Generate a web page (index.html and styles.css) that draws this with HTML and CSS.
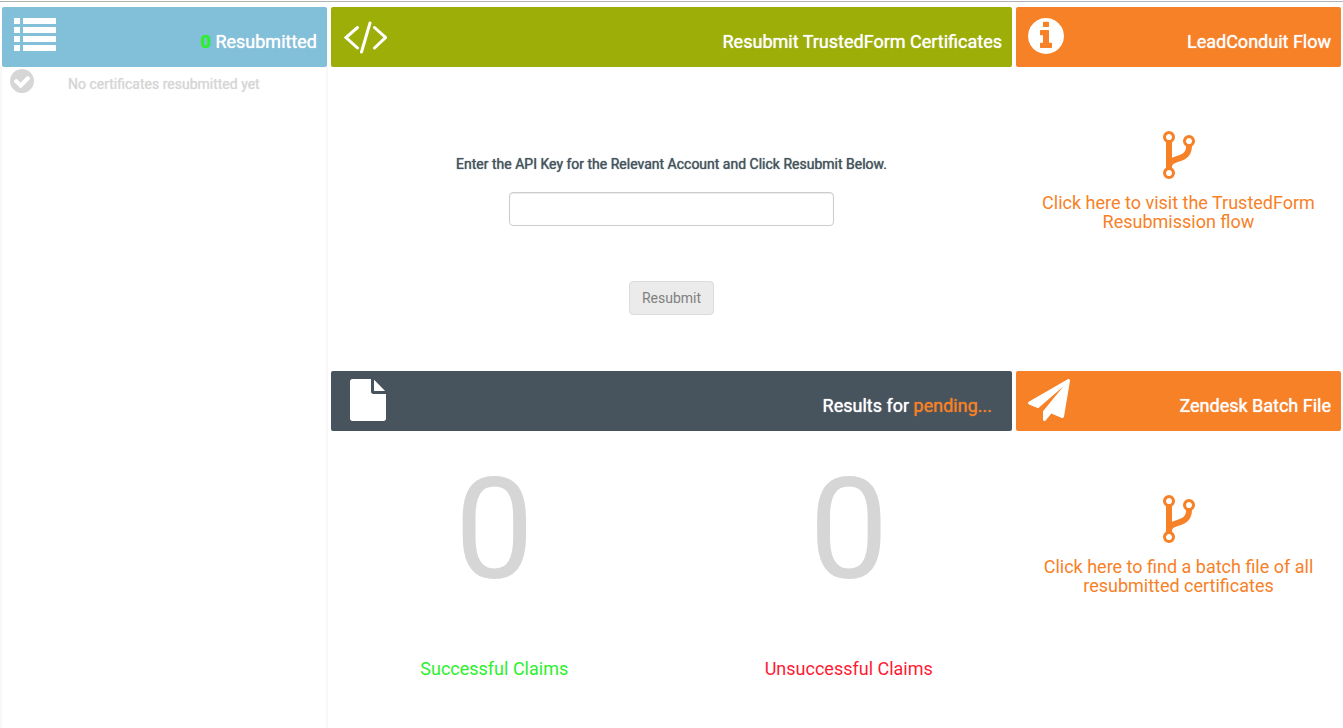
FILE: index.html
```html
<!DOCTYPE html>
<html lang="en">
<head>
<meta charset="utf-8">
<title>Resubmit TrustedForm Certificates</title>
<link rel="stylesheet" href="styles.css">
</head>
<body>
<main class="board">
  <section class="panel panel-log">
    <header class="bar bar-blue">
      <svg class="icon" width="42" height="42" viewBox="0 0 42 42" aria-hidden="true"><path d="M0 3h6v6H0zM9 3h33v6H9zM0 12h6v6H0zM9 12h33v6H9zM0 21h6v6H0zM9 21h33v6H9zM0 30h6v6H0zM9 30h33v6H9z"/></svg>
      <h2 class="bar-title"><span class="count">0</span> Resubmitted</h2>
    </header>
    <ul class="log">
      <li class="log-item">
        <svg class="icon" width="24" height="24" viewBox="128 128 1536 1536" aria-hidden="true"><path d="M1412 734q0-28-18-46l-91-90q-19-19-45-19t-45 19l-408 407-226-226q-19-19-45-19t-45 19l-91 90q-18 18-18 46 0 27 18 45l362 362q19 19 45 19 27 0 46-19l543-543q18-18 18-45zm252 162q0 209-103 385.5t-279.5 279.5-385.5 103-385.5-103-279.5-279.5-103-385.5 103-385.5 279.5-279.5 385.5-103 385.5 103 279.5 279.5 103 385.5z"/></svg>
        <span>No certificates resubmitted yet</span>
      </li>
    </ul>
  </section>

  <section class="panel">
    <header class="bar bar-green">
      <svg class="icon icon-code" width="44" height="44" viewBox="0 0 44 44" aria-hidden="true"><path d="M14.500 12.500 3 22.500l11.500 10.500M27 8l-8.500 29M31.500 12.500l11 10L31.500 33"/></svg>
      <h2 class="bar-title">Resubmit TrustedForm Certificates</h2>
    </header>
    <form class="form">
      <label class="form-label" for="api-key">Enter the API Key for the Relevant Account and Click Resubmit Below.</label>
      <input class="form-input" id="api-key" type="text">
      <button class="form-button" type="button" disabled>Resubmit</button>
    </form>
  </section>

  <section class="panel">
    <header class="bar bar-orange">
      <svg class="icon" width="36" height="42" viewBox="128 0 1536 1792" aria-hidden="true"><path d="M1152 1376v-160q0-14-9-23t-23-9h-96v-512q0-14-9-23t-23-9h-320q-14 0-23 9t-9 23v160q0 14 9 23t23 9h96v320h-96q-14 0-23 9t-9 23v160q0 14 9 23t23 9h448q14 0 23-9t9-23zm-128-896v-160q0-14-9-23t-23-9h-192q-14 0-23 9t-9 23v160q0 14 9 23t23 9h192q14 0 23-9t9-23zm640 416q0 209-103 385.5t-279.5 279.5-385.5 103-385.5-103-279.5-279.5-103-385.5 103-385.5 279.5-279.5 385.5-103 385.5 103 279.5 279.5 103 385.5z"/></svg>
      <h2 class="bar-title">LeadConduit Flow</h2>
    </header>
    <a class="jump" href="#flow">
      <svg class="icon" width="32" height="48" viewBox="384 128 1024 1536" aria-hidden="true"><path d="M672 1472q0-40-28-68t-68-28-68 28-28 68 28 68 68 28 68-28 28-68zm0-1152q0-40-28-68t-68-28-68 28-28 68 28 68 68 28 68-28 28-68zm640 128q0-40-28-68t-68-28-68 28-28 68 28 68 68 28 68-28 28-68zm96 0q0 52-26 96.5t-70 69.5q-2 287-226 414-67 38-203 81-128 40-169.5 71t-41.500 100v26q44 25 70 69.5t26 96.5q0 80-56 136t-136 56-136-56-56-136q0-52 26-96.5t70-69.5v-820q-44-25-70-69.5t-26-96.5q0-80 56-136t136-56 136 56 56 136q0 52-26 96.5t-70 69.5v497q54-26 154-57 55-17 87.5-29.5t70.5-31 59-39.5 40.5-51 28-69.5 8.5-91.5q-44-25-70-69.5t-26-96.5q0-80 56-136t136-56 136 56 56 136z"/></svg>
      <span>Click here to visit the TrustedForm Resubmission flow</span>
    </a>
  </section>

  <section class="panel">
    <header class="bar bar-slate">
      <svg class="icon icon-file" width="36" height="42" viewBox="128 0 1536 1792" aria-hidden="true"><path d="M1152 512v-472q22 14 36 28l408 408q14 14 28 36h-472zm-128 32q0 40 28 68t68 28h544v1056q0 40-28 68t-68 28h-1344q-40 0-68-28t-28-68v-1600q0-40 28-68t68-28h800v544z"/></svg>
      <h2 class="bar-title">Results for <span class="pending">pending...</span></h2>
    </header>
    <div class="results">
      <div class="result">
        <div class="result-number">0</div>
        <div class="result-label result-good">Successful Claims</div>
      </div>
      <div class="result">
        <div class="result-number">0</div>
        <div class="result-label result-bad">Unsuccessful Claims</div>
      </div>
    </div>
  </section>

  <section class="panel">
    <header class="bar bar-orange">
      <svg class="icon" width="42" height="42" viewBox="0 0 1792 1792" aria-hidden="true"><path d="M1764 11q33 24 27 64l-256 1536q-5 29-32 45-14 8-31 8-11 0-24-5l-453-185-242 295q-18 23-49 23-13 0-22-4-19-7-30.5-23.5t-11.500-36.5v-349l864-1059-1069 925-395-162q-37-14-40-55-2-40 32-59l1664-960q15-9 32-9 20 0 36 11z"/></svg>
      <h2 class="bar-title">Zendesk Batch File</h2>
    </header>
    <a class="jump" href="#batch">
      <svg class="icon" width="32" height="48" viewBox="384 128 1024 1536" aria-hidden="true"><path d="M672 1472q0-40-28-68t-68-28-68 28-28 68 28 68 68 28 68-28 28-68zm0-1152q0-40-28-68t-68-28-68 28-28 68 28 68 68 28 68-28 28-68zm640 128q0-40-28-68t-68-28-68 28-28 68 28 68 68 28 68-28 28-68zm96 0q0 52-26 96.5t-70 69.5q-2 287-226 414-67 38-203 81-128 40-169.5 71t-41.500 100v26q44 25 70 69.5t26 96.5q0 80-56 136t-136 56-136-56-56-136q0-52 26-96.5t70-69.5v-820q-44-25-70-69.5t-26-96.5q0-80 56-136t136-56 136 56 56 136q0 52-26 96.5t-70 69.5v497q54-26 154-57 55-17 87.5-29.5t70.5-31 59-39.5 40.5-51 28-69.5 8.5-91.5q-44-25-70-69.5t-26-96.5q0-80 56-136t136-56 136 56 56 136z"/></svg>
      <span>Click here to find a batch file of all resubmitted certificates</span>
    </a>
  </section>
</main>
</body>
</html>
```

FILE: styles.css
```css
* {
  box-sizing: border-box;
}

body {
  margin: 0;
  padding-top: 1px;
  background: #fff;
  color: #47545e;
  font-family: Roboto, "Liberation Sans", sans-serif;
  font-size: 14px;
}

.board {
  display: grid;
  grid-template-columns: minmax(0, 325fr) minmax(0, 681fr) minmax(0, 325fr);
  grid-template-rows: minmax(364px, auto) 1fr;
  column-gap: 4px;
  min-height: calc(100vh - 1px);
  padding: 5px 2px 0;
  border-top: 1px solid #b3b3b3;
}

.panel {
  display: flex;
  flex-direction: column;
}

.panel-log {
  grid-row: span 2;
}

.icon {
  flex: none;
  fill: currentColor;
}

.bar {
  display: flex;
  justify-content: space-between;
  height: 60px;
  padding: 8px 10px 0 12px;
  border-radius: 2px;
  color: #fff;
}

.bar-blue { background: #82bfd9; }
.bar-green { background: #9cae07; }
.bar-orange { background: #f78127; }

.bar-slate {
  padding-right: 20px;
  background: #47545e;
}

.bar-title {
  margin: 0;
  font-size: 18px;
  font-weight: 400;
  line-height: 53px;
  text-shadow: 0 0 1px currentColor;
}

.icon-code {
  fill: none;
  stroke: currentColor;
  stroke-width: 3;
  stroke-linecap: round;
}

.icon-file {
  margin-left: 7px;
}

.count {
  color: #2bf02b;
  font-weight: 700;
}

.pending { color: #f78127; }

.log {
  flex: 1;
  margin: 0 -1px 0 -2px;
  padding: 2px 8px;
  border: solid #f8f8f8;
  border-width: 0 2px;
  list-style: none;
}

.log-item {
  display: flex;
  gap: 34px;
  color: #d6d6d6;
  line-height: 30px;
  text-shadow: 0 0 1px currentColor;
}

.form {
  display: flex;
  flex-direction: column;
  align-items: center;
  padding: 87px 16px 0;
}

.form-label {
  line-height: 20px;
  text-shadow: 0 0 1px currentColor;
}

.form-input {
  width: 325px;
  max-width: 100%;
  height: 34px;
  margin: 18px 0 55px;
  padding: 6px 12px;
  border: 1px solid #ccc;
  border-radius: 4px;
  box-shadow: inset 0 1px 1px rgba(0, 0, 0, 0.08);
  font: inherit;
}

.form-button {
  padding: 6px 12px;
  border: 1px solid #dcdcdc;
  border-radius: 4px;
  background: #ebebeb;
  color: #808080;
  font: inherit;
  line-height: 20px;
}

.jump {
  display: flex;
  flex-direction: column;
  align-items: center;
  gap: 14px;
  padding: 64px 16px 0;
  color: #f78127;
  font-size: 18px;
  line-height: 19px;
  text-align: center;
  text-decoration: none;
}

.results {
  display: grid;
  grid-template-columns: 1fr 1fr;
  column-gap: 28px;
  padding: 19px 0 0;
}

.result {
  text-align: center;
}

.result-number {
  color: #d6d6d6;
  font-size: 141px;
  line-height: 160px;
}

.result-label {
  margin-top: 49px;
  font-size: 18px;
  line-height: 20px;
}

.result-good { color: #2bf02b; }
.result-bad { color: #ff1a33; }
```
